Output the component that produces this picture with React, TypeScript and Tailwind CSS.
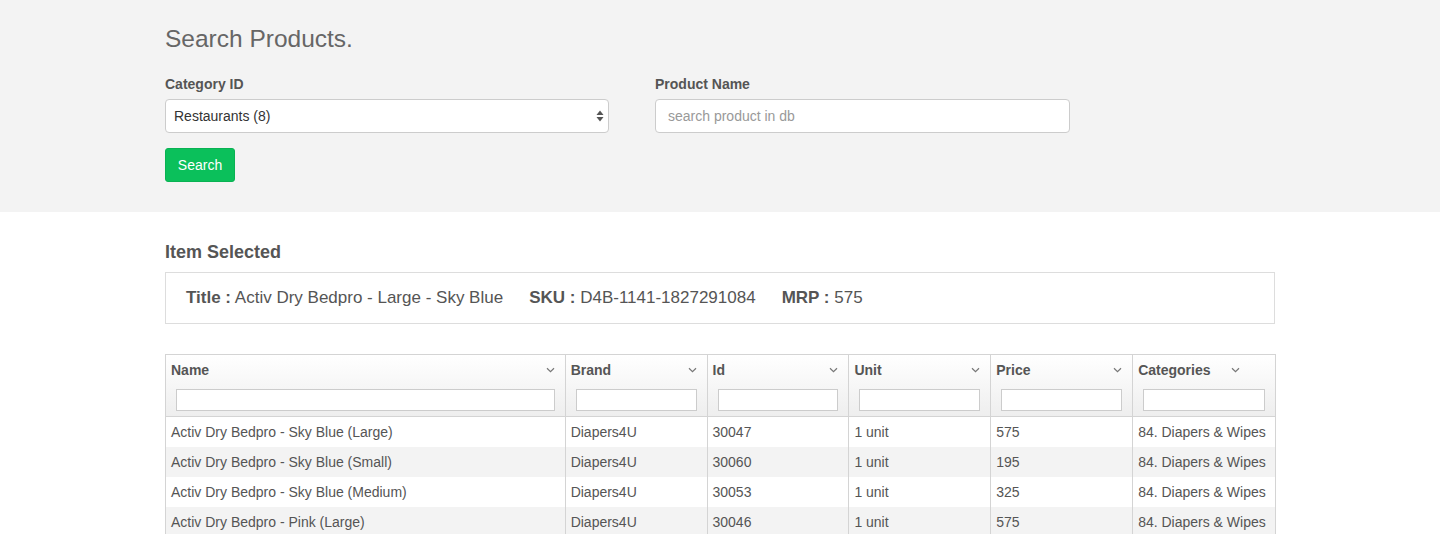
import React, { useState } from 'react';

const font = { fontFamily: '"Liberation Sans", Arial, sans-serif' };

const rows = [
  { name: 'Activ Dry Bedpro - Sky Blue (Large)', brand: 'Diapers4U', id: '30047', unit: '1 unit', price: '575', cat: '84. Diapers & Wipes' },
  { name: 'Activ Dry Bedpro - Sky Blue (Small)', brand: 'Diapers4U', id: '30060', unit: '1 unit', price: '195', cat: '84. Diapers & Wipes' },
  { name: 'Activ Dry Bedpro - Sky Blue (Medium)', brand: 'Diapers4U', id: '30053', unit: '1 unit', price: '325', cat: '84. Diapers & Wipes' },
  { name: 'Activ Dry Bedpro - Pink (Large)', brand: 'Diapers4U', id: '30046', unit: '1 unit', price: '575', cat: '84. Diapers & Wipes' },
];

const columns = [
  { label: 'Name', w: 'w-[400px]' },
  { label: 'Brand', w: 'w-[142px]' },
  { label: 'Id', w: 'w-[142px]' },
  { label: 'Unit', w: 'w-[142px]' },
  { label: 'Price', w: 'w-[142px]' },
  { label: 'Categories', w: 'w-[142px]' },
];

const Chevron = () => (
  <svg width="9" height="6" viewBox="0 0 9 6" className="shrink-0">
    <path d="M1 1.2 L4.5 4.6 L8 1.2" fill="none" stroke="#777" strokeWidth="1.2" />
  </svg>
);

const App = () => {
  const [category, setCategory] = useState('8');
  const [query, setQuery] = useState('');

  return (
    <div style={font} className="min-h-[534px] bg-white text-[#555]">
      {/* Search band */}
      <div className="bg-[#f3f3f3] h-[212px] pt-[24px]">
        <div className="ml-[165px] w-[1110px]">
          <h1 className="text-[24.5px] leading-[30px] text-[#666] font-light">Search Products.</h1>

          <div className="flex gap-[46px] mt-[20px]">
            <div className="w-[444px]">
              <label className="block text-[14px] leading-[20px] font-bold text-[#555]">Category ID</label>
              <div className="relative mt-[5px]">
                <select
                  value={category}
                  onChange={(e) => setCategory(e.target.value)}
                  style={font}
                  className="appearance-none w-full h-[34px] bg-white border border-[#ccc] rounded-[4px] px-[8px] text-[14px] text-[#333] outline-none"
                >
                  <option value="8">Restaurants (8)</option>
                </select>
                <svg width="8" height="12" viewBox="0 0 8 12" className="absolute right-[5px] top-[11px] pointer-events-none">
                  <path d="M4 0.5 L7.5 5 H0.5 Z" fill="#555" />
                  <path d="M4 11.5 L7.5 7 H0.5 Z" fill="#555" />
                </svg>
              </div>
            </div>
            <div className="w-[415px]">
              <label className="block text-[14px] leading-[20px] font-bold text-[#555]">Product Name</label>
              <input
                value={query}
                onChange={(e) => setQuery(e.target.value)}
                placeholder="search product in db"
                style={font}
                className="mt-[5px] w-full h-[34px] bg-white border border-[#ccc] rounded-[4px] px-[12px] text-[14px] text-[#333] placeholder:text-[#999] outline-none"
              />
            </div>
          </div>

          <button className="mt-[15px] w-[70px] h-[34px] bg-[#0bc05b] rounded-[3px] text-white text-[14px] border border-[#09b253]">
            Search
          </button>
        </div>
      </div>

      {/* Selected item */}
      <div className="ml-[165px] w-[1110px] pt-[29px]">
        <h2 className="text-[18px] leading-[22px] font-bold text-[#555]">Item Selected</h2>
        <div className="mt-[9px] h-[52px] border border-[#ddd] flex items-center px-[20px] gap-[26px] text-[17px] text-[#555]">
          <span><b>Title :</b> Activ Dry Bedpro - Large - Sky Blue</span>
          <span><b>SKU :</b> D4B-1141-1827291084</span>
          <span><b>MRP :</b> 575</span>
        </div>

        {/* Table */}
        <div className="mt-[30px] w-[1111px] border-l border-t border-r border-[#d4d4d4] text-[14px]">
          <div className="flex bg-gradient-to-b from-[#ffffff] to-[#eeeeee] border-b border-[#d4d4d4]">
            {columns.map((c, i) => (
              <div
                key={c.label}
                className={`${c.w} h-[61px] pt-[7px] ${i < columns.length - 1 ? 'border-r border-[#d4d4d4]' : ''}`}
              >
                <div className={`flex items-center h-[16px] px-[5px] ${c.label === 'Categories' ? 'gap-[20px]' : 'justify-between pr-[10px]'}`}>
                  <span className="font-bold text-[#555]">{c.label}</span>
                  <Chevron />
                </div>
                <div className="px-[10px] mt-[11px]">
                  <input className="block w-full h-[22px] bg-white border border-[#ccc] outline-none" />
                </div>
              </div>
            ))}
          </div>
          {rows.map((r, ri) => (
            <div key={ri} className={`flex h-[30px] ${ri % 2 === 1 ? 'bg-[#f3f3f3]' : 'bg-white'}`}>
              {[r.name, r.brand, r.id, r.unit, r.price, r.cat].map((v, i) => (
                <div
                  key={i}
                  className={`${columns[i].w} px-[5px] flex items-center text-[#555] ${i < 5 ? 'border-r border-[#d4d4d4]' : ''}`}
                >
                  {v}
                </div>
              ))}
            </div>
          ))}
        </div>
      </div>
    </div>
  );
};

export default App;
